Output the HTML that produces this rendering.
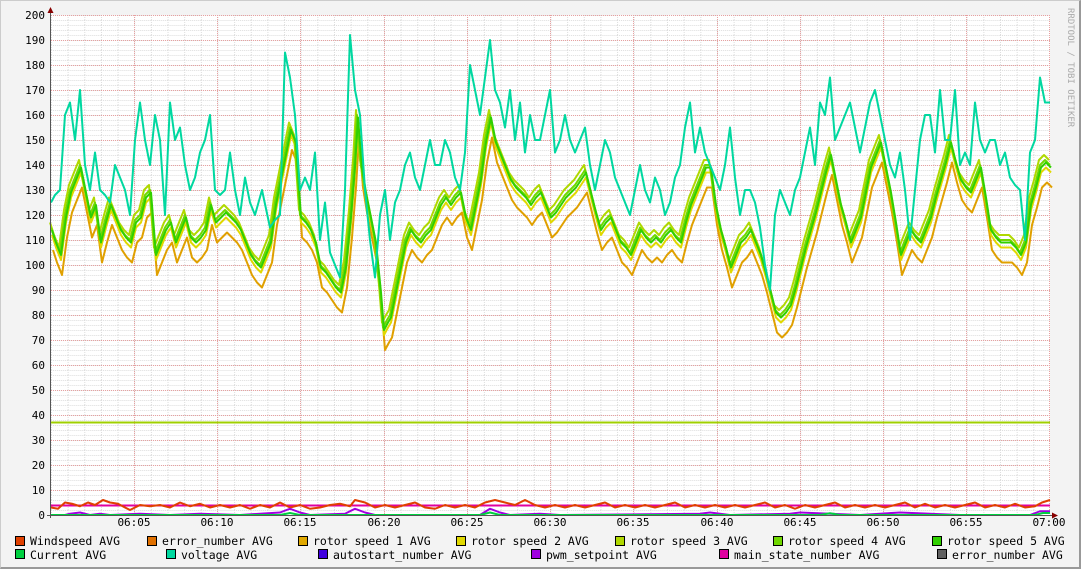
<!DOCTYPE html>
<html><head><meta charset="utf-8"><style>
html,body{margin:0;padding:0;background:#f3f3f3;}
body{width:1081px;height:569px;overflow:hidden;position:relative;font-family:"DejaVu Sans Mono","Liberation Mono",monospace;}
.frame{position:absolute;left:0;top:0;width:1079px;height:567px;border-top:1px solid #ccc;border-left:1px solid #ccc;border-right:2px solid #999;border-bottom:2px solid #999;box-sizing:border-box;width:1081px;height:569px;}
</style></head><body>
<div class="frame"></div>
<svg width="1081" height="569" style="position:absolute;left:0;top:0" font-family="DejaVu Sans Mono, Liberation Mono, monospace">
<defs>
<pattern id="minx" x="51" y="0" width="16.65" height="5" patternUnits="userSpaceOnUse">
<line x1="0.5" y1="0" x2="0.5" y2="5" stroke="#ddd" stroke-dasharray="1,1"/>
<line x1="0" y1="0.5" x2="16.65" y2="0.5" stroke="#ddd" stroke-dasharray="1,1"/>
</pattern>
</defs>
<rect x="51" y="15" width="999" height="500" fill="#fff"/>
<rect x="51" y="15" width="999" height="500" fill="url(#minx)"/>
<g stroke="#e8a0a0" stroke-dasharray="1,1" stroke-width="1">
<line x1="51" x2="1050" y1="15.5" y2="15.5"/><line x1="51" x2="1050" y1="40.5" y2="40.5"/><line x1="51" x2="1050" y1="65.5" y2="65.5"/><line x1="51" x2="1050" y1="90.5" y2="90.5"/><line x1="51" x2="1050" y1="115.5" y2="115.5"/><line x1="51" x2="1050" y1="140.5" y2="140.5"/><line x1="51" x2="1050" y1="165.5" y2="165.5"/><line x1="51" x2="1050" y1="190.5" y2="190.5"/><line x1="51" x2="1050" y1="215.5" y2="215.5"/><line x1="51" x2="1050" y1="240.5" y2="240.5"/><line x1="51" x2="1050" y1="265.5" y2="265.5"/><line x1="51" x2="1050" y1="290.5" y2="290.5"/><line x1="51" x2="1050" y1="315.5" y2="315.5"/><line x1="51" x2="1050" y1="340.5" y2="340.5"/><line x1="51" x2="1050" y1="365.5" y2="365.5"/><line x1="51" x2="1050" y1="390.5" y2="390.5"/><line x1="51" x2="1050" y1="415.5" y2="415.5"/><line x1="51" x2="1050" y1="440.5" y2="440.5"/><line x1="51" x2="1050" y1="465.5" y2="465.5"/><line x1="51" x2="1050" y1="490.5" y2="490.5"/>
<line y1="15" y2="515" x1="134.5" x2="134.5"/><line y1="15" y2="515" x1="217.5" x2="217.5"/><line y1="15" y2="515" x1="300.5" x2="300.5"/><line y1="15" y2="515" x1="384.5" x2="384.5"/><line y1="15" y2="515" x1="467.5" x2="467.5"/><line y1="15" y2="515" x1="550.5" x2="550.5"/><line y1="15" y2="515" x1="633.5" x2="633.5"/><line y1="15" y2="515" x1="717.5" x2="717.5"/><line y1="15" y2="515" x1="800.5" x2="800.5"/><line y1="15" y2="515" x1="883.5" x2="883.5"/><line y1="15" y2="515" x1="966.5" x2="966.5"/><line y1="15" y2="515" x1="1049.5" x2="1049.5"/>
</g>
<g font-size="11" fill="#000" text-anchor="end">
<text x="45" y="19">200</text><text x="45" y="44">190</text><text x="45" y="69">180</text><text x="45" y="94">170</text><text x="45" y="119">160</text><text x="45" y="144">150</text><text x="45" y="169">140</text><text x="45" y="194">130</text><text x="45" y="219">120</text><text x="45" y="244">110</text><text x="45" y="269">100</text><text x="45" y="294">90</text><text x="45" y="319">80</text><text x="45" y="344">70</text><text x="45" y="369">60</text><text x="45" y="394">50</text><text x="45" y="419">40</text><text x="45" y="444">30</text><text x="45" y="469">20</text><text x="45" y="494">10</text><text x="45" y="519">0</text>
</g>
<g font-size="11" fill="#000" text-anchor="middle">
<text x="134" y="526">06:05</text><text x="217" y="526">06:10</text><text x="300" y="526">06:15</text><text x="384" y="526">06:20</text><text x="467" y="526">06:25</text><text x="550" y="526">06:30</text><text x="633" y="526">06:35</text><text x="717" y="526">06:40</text><text x="800" y="526">06:45</text><text x="883" y="526">06:50</text><text x="966" y="526">06:55</text><text x="1049" y="526">07:00</text>
</g>
<text x="1068" y="8" font-size="9" fill="#aaa" transform="rotate(90 1068 8)">RRDTOOL / TOBI OETIKER</text>

<g transform="translate(0,515) scale(1,-2.5)" fill="none" stroke-linejoin="round">
<defs>
<polyline id="g" points="51,115 55,110 60,105 65,120 70,130 75,135 80,140 85,130 90,120 95,125 100,110 105,118 110,125 115,120 120,115 125,112 130,110 135,118 140,120 145,128 150,130 155,105 160,110 165,115 170,118 175,110 180,115 185,120 190,112 195,110 200,112 205,115 210,125 215,118 220,120 225,122 230,120 235,118 240,115 245,110 250,105 255,102 260,100 265,105 270,110 275,125 280,135 285,145 290,155 295,150 300,120 305,118 310,115 315,110 320,100 325,98 330,95 335,92 340,90 345,100 350,120 354,140 357,160 361,140 365,130 370,120 375,110 380,90 383,75 387,78 390,80 395,90 400,100 405,110 410,115 415,112 420,110 425,113 430,115 435,120 440,125 445,128 450,125 455,128 460,130 465,120 470,115 475,125 480,135 485,150 490,160 495,150 500,145 505,140 510,135 515,132 520,130 525,128 530,125 535,128 540,130 545,125 550,120 555,122 560,125 565,128 570,130 575,132 580,135 585,138 590,130 595,122 600,115 605,118 610,120 615,115 620,110 625,108 630,105 635,110 640,115 645,112 650,110 655,112 660,110 665,113 670,115 675,112 680,110 685,118 690,125 695,130 700,135 705,140 710,140 715,125 720,115 725,108 730,100 735,105 740,110 745,112 750,115 755,110 760,105 765,98 770,90 775,82 780,80 785,82 790,85 795,92 800,100 805,108 810,115 815,122 820,130 825,138 830,145 835,135 840,125 845,118 850,110 855,115 860,120 865,130 870,140 875,145 880,150 885,140 890,130 895,118 900,105 905,110 910,115 915,112 920,110 925,115 930,120 935,128 940,135 945,142 950,150 955,142 960,135 965,132 970,130 975,135 980,140 985,128 990,115 995,112 1000,110 1005,110 1010,110 1015,108 1020,105 1025,110 1030,125 1035,132 1040,140 1045,142 1050,140" vector-effect="non-scaling-stroke"/>
</defs>
<g transform="translate(2,-9)"><use href="#g" stroke="#e0a000" stroke-width="2"/></g>
<g transform="translate(1,-3)"><use href="#g" stroke="#e0d800" stroke-width="2"/></g>
<g transform="translate(-1,2)"><use href="#g" stroke="#b0d800" stroke-width="2"/></g>
<g transform="translate(0,0)"><use href="#g" stroke="#70d800" stroke-width="2"/></g>
<g transform="translate(1,-1)"><use href="#g" stroke="#30d000" stroke-width="2"/></g>
<polyline vector-effect="non-scaling-stroke" stroke="#00d8a0" stroke-width="2" points="51,125 55,128 60,130 65,160 70,165 75,150 80,170 85,140 90,130 95,145 100,130 105,128 110,125 115,140 120,135 125,130 130,120 135,150 140,165 145,150 150,140 155,160 160,150 165,120 170,165 175,150 180,155 185,140 190,130 195,135 200,145 205,150 210,160 215,130 220,128 225,130 230,145 235,130 240,120 245,135 250,125 255,120 262,130 270,115 275,118 280,120 285,185 290,175 295,160 300,130 305,135 310,130 315,145 320,110 325,125 330,105 335,100 340,95 345,130 350,192 355,170 360,160 365,130 370,110 375,95 380,120 385,130 390,110 395,125 400,130 405,140 410,145 415,135 420,130 425,140 430,150 435,140 440,140 445,150 450,145 455,135 460,130 465,145 470,180 475,170 480,160 485,175 490,190 495,170 500,165 505,155 510,170 515,150 520,165 525,145 530,160 535,150 540,150 545,160 550,170 555,145 560,150 565,160 570,150 575,145 580,150 585,155 590,140 595,130 600,140 605,150 610,145 615,135 620,130 625,125 630,120 635,130 640,140 645,130 650,125 655,135 660,130 665,120 670,125 675,135 680,140 685,155 690,165 695,145 700,155 705,145 710,140 715,135 720,130 725,140 730,155 735,135 740,120 745,130 750,130 755,125 760,115 765,100 770,90 775,120 780,130 785,125 790,120 795,130 800,135 805,145 810,155 815,140 820,165 825,160 830,175 835,150 840,155 845,160 850,165 855,155 860,145 865,155 870,165 875,170 880,160 885,150 890,140 895,135 900,145 905,130 910,110 915,130 920,150 925,160 930,160 935,145 940,170 945,150 950,150 955,170 960,140 965,145 970,140 975,165 980,150 985,145 990,150 995,150 1000,140 1005,145 1010,135 1015,132 1020,130 1025,110 1030,145 1035,150 1040,175 1045,165 1050,165"/>
<line x1="51" x2="1050" y1="37" y2="37" vector-effect="non-scaling-stroke" stroke="#a0d000" stroke-width="2"/>
<line x1="51" x2="1050" y1="3.8" y2="3.8" vector-effect="non-scaling-stroke" stroke="#e000a0" stroke-width="2"/>
<polyline vector-effect="non-scaling-stroke" stroke="#e04000" stroke-width="2" points="51,3 58,2.5 65,5 72,4.5 80,3.5 88,5 95,4 103,6 110,5 118,4.5 125,3 130,2 140,4 150,3.5 160,4 170,3 180,5 190,3.5 200,4.5 210,3 220,4 230,3 240,4 250,2.5 260,4 270,3 280,5 290,3 300,4 310,2.5 320,3 330,4 340,4.5 350,3.5 355,6 365,5 375,3 385,4 395,3 405,4 415,5 425,3 435,2.5 445,4 455,3 465,4 475,3 485,5 495,6 505,5 515,4 525,6 535,4 545,3 555,4 565,3 575,4 585,3 595,4 605,5 615,3 625,4 635,3 645,4 655,3 665,4 675,5 685,3 695,4 705,3 715,4 725,3 735,4 745,3 755,4 765,5 775,3 785,4 795,2.5 805,4 815,3 825,4 835,5 845,3 855,4 865,3 875,4 885,3 895,4 905,5 915,3 925,4.5 935,3 945,4 955,3 965,4 975,5 985,3 995,4 1005,3 1015,4.5 1025,3 1035,3.5 1042,5 1050,6"/>
<polyline vector-effect="non-scaling-stroke" stroke="#a000e0" stroke-width="2" points="51,0 65,0 70,0.5 80,1 90,0 100,0.5 110,0 140,0.5 170,0 200,0.5 240,0 280,1 290,2.5 300,1 310,0 345,0.5 355,2.5 365,1 375,0 480,0 490,2.5 500,1 510,0 540,0.5 560,0 700,0.5 710,1 730,0 790,0.5 800,1 830,0.5 860,0 900,1 930,0.5 960,0 1030,0 1040,1.5 1050,1.5"/>
<polyline vector-effect="non-scaling-stroke" stroke="#00d040" stroke-width="2" points="51,0 280,0 290,0.8 300,0 480,0 490,1 500,0 820,0 830,0.7 840,0 1035,0 1043,0.8 1050,0.8"/>
</g>
<line x1="50.5" y1="12" x2="50.5" y2="518" stroke="#555"/>
<line x1="47" y1="515.5" x2="1053" y2="515.5" stroke="#555"/>
<polygon points="47.5,13 53.5,13 50.5,7" fill="#800"/>
<polygon points="1052,512.5 1052,518.5 1058,515.5" fill="#800"/>

<g font-size="11.5" fill="#000">
<g stroke="#000" stroke-width="1">
<rect x="15.5" y="536.5" width="9" height="9" fill="#e04000"/>
<rect x="147.5" y="536.5" width="9" height="9" fill="#e07000"/>
<rect x="298.5" y="536.5" width="9" height="9" fill="#e0a800"/>
<rect x="456.5" y="536.5" width="9" height="9" fill="#e0d800"/>
<rect x="615.5" y="536.5" width="9" height="9" fill="#b0d800"/>
<rect x="773.5" y="536.5" width="9" height="9" fill="#70d800"/>
<rect x="932.5" y="536.5" width="9" height="9" fill="#30d000"/>
<rect x="15.5" y="549.5" width="9" height="9" fill="#00d040"/>
<rect x="166.5" y="549.5" width="9" height="9" fill="#00d8a0"/>
<rect x="318.5" y="549.5" width="9" height="9" fill="#4000e0"/>
<rect x="531.5" y="549.5" width="9" height="9" fill="#a000e0"/>
<rect x="719.5" y="549.5" width="9" height="9" fill="#e000a0"/>
<rect x="937.5" y="549.5" width="9" height="9" fill="#606060"/>
</g>
<text x="30" y="545">Windspeed AVG</text>
<text x="162" y="545">error_number AVG</text>
<text x="313" y="545">rotor speed 1 AVG</text>
<text x="471" y="545">rotor speed 2 AVG</text>
<text x="630" y="545">rotor speed 3 AVG</text>
<text x="788" y="545">rotor speed 4 AVG</text>
<text x="947" y="545">rotor speed 5 AVG</text>
<text x="30" y="559">Current AVG</text>
<text x="181" y="559">voltage AVG</text>
<text x="333" y="559">autostart_number AVG</text>
<text x="546" y="559">pwm_setpoint AVG</text>
<text x="734" y="559">main_state_number AVG</text>
<text x="952" y="559">error_number AVG</text>
</g>
</svg>
</body></html>
